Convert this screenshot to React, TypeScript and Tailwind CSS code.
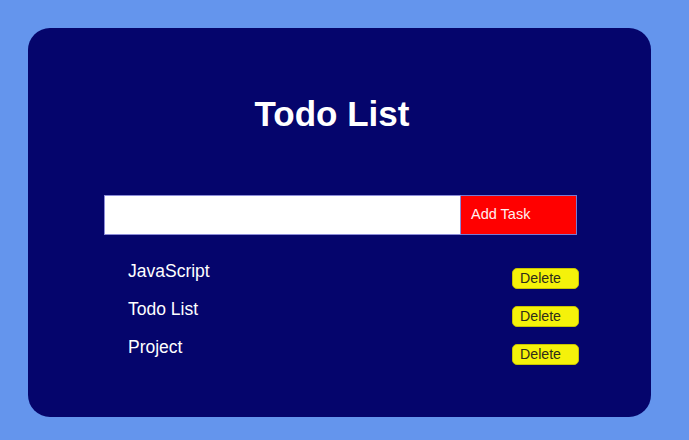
import { useState } from "react";

interface Task {
  id: number;
  text: string;
}

export default function App() {
  const [tasks, setTasks] = useState<Task[]>([
    { id: 1, text: "JavaScript" },
    { id: 2, text: "Todo List" },
    { id: 3, text: "Project" },
  ]);
  const [input, setInput] = useState("");

  const addTask = () => {
    if (!input.trim()) return;
    setTasks((prev) => [...prev, { id: Date.now(), text: input.trim() }]);
    setInput("");
  };

  const deleteTask = (id: number) => {
    setTasks((prev) => prev.filter((t) => t.id !== id));
  };

  return (
    <div
      className="min-h-[440px] bg-[#6495ed] pt-[28px] pl-[28px]"
      style={{ fontFamily: '"Liberation Sans", Arial, sans-serif' }}
    >
      <div className="w-[623px] h-[389px] rounded-[22px] bg-[#05056c] pt-[66px]">
        <h1 className="text-[35px] leading-[40px] font-bold text-white text-center pr-[15px]">
          Todo List
        </h1>

        {/* Input */}
        <div className="flex mt-[61px] ml-[76px] w-[473px] h-[40px]">
          <input
            value={input}
            onChange={(e) => setInput(e.target.value)}
            className="w-[357px] h-full bg-white border border-[#8c8cd8] px-2 text-[14px] text-black focus:outline-none"
          />
          <button
            onClick={addTask}
            className="w-[116px] h-full bg-[#ff0000] border border-l-0 border-[#7a7ad0] text-left pl-[10px] text-[14.5px] text-[#fff0f0]"
          >
            Add Task
          </button>
        </div>

        {/* List */}
        <ul className="mt-[24px] ml-[76px] w-[475px]">
          {tasks.map((task) => (
            <li key={task.id} className="flex justify-between items-start h-[38px] pl-[24px]">
              <span className="text-[17.5px] leading-[24px] text-white">{task.text}</span>
              <button
                onClick={() => deleteTask(task.id)}
                className="mt-[9px] w-[67px] h-[21px] rounded-[5px] bg-[#f5f20a] border border-[#c8c400] text-left pl-[7px] text-[14.2px] leading-[19px] text-[#2e2e1a]"
              >
                Delete
              </button>
            </li>
          ))}
        </ul>
      </div>
    </div>
  );
}
